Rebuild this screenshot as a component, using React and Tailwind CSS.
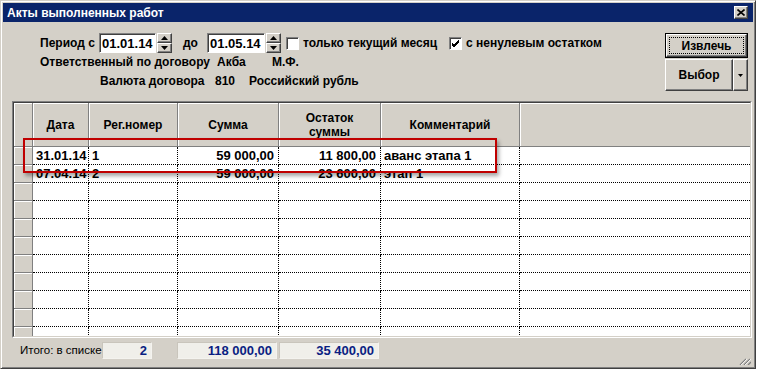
import React from "react";

const raised = "border border-white border-r-[#404040] border-b-[#404040] shadow-[inset_-1px_-1px_0_#808080]";
const sunken = "border border-[#808080] border-r-white border-b-white shadow-[inset_1px_1px_0_#404040]";

const rows = [
  ["31.01.14", "1", "59 000,00", "11 800,00", "аванс этапа 1"],
  ["07.04.14", "2", "59 000,00", "23 600,00", "этап 1"],
  ["", "", "", "", ""],
  ["", "", "", "", ""],
  ["", "", "", "", ""],
  ["", "", "", "", ""],
  ["", "", "", "", ""],
  ["", "", "", "", ""],
  ["", "", "", "", ""],
  ["", "", "", "", ""],
  ["", "", "", "", ""],
];

function Spinner() {
  return (
    <div className="flex flex-col w-[15px] h-[20px] ml-[1px]">
      <div className={`flex-1 flex items-center justify-center bg-[#d4d0c8] ${raised}`}>
        <svg width="7" height="4" viewBox="0 0 7 4"><path d="M3.5 0L7 4H0z" fill="#000" /></svg>
      </div>
      <div className={`flex-1 flex items-center justify-center bg-[#d4d0c8] ${raised}`}>
        <svg width="7" height="4" viewBox="0 0 7 4"><path d="M0 0h7L3.5 4z" fill="#000" /></svg>
      </div>
    </div>
  );
}

function DateInput({ value, w }) {
  return (
    <div className={`${w} h-[20px] bg-white ${sunken} flex items-center pl-[2px] text-[13px] leading-none`}>
      {value}
    </div>
  );
}

function CheckBox({ checked }) {
  return (
    <div className={`w-[13px] h-[13px] bg-white ${sunken} flex items-center justify-center`}>
      {checked && (
        <svg width="9" height="9" viewBox="0 0 9 9">
          <path d="M1 4l2 2 5-5M1 5l2 2 5-5M1 6l2 2 5-5" stroke="#000" strokeWidth="1" fill="none" />
        </svg>
      )}
    </div>
  );
}

export default function App() {
  return (
    <div className="w-[757px] h-[370px] bg-white font-['Liberation_Sans',Arial,sans-serif] text-black">
      <div className="relative w-[756px] h-[369px] bg-[#d4d0c8] border border-[#d4d0c8] border-r-[#404040] border-b-[#404040] shadow-[inset_1px_1px_0_#fff,inset_-1px_-1px_0_#808080] p-[2px] flex flex-col">
        {/* Title bar */}
        <div className="h-[19px] shrink-0 bg-[#0a246a] flex items-center justify-between pl-[4px] pr-[5px]">
          <span className="text-white text-[12px] font-bold leading-none">Акты выполненных работ</span>
          <div className={`w-[14px] h-[13px] bg-[#d4d0c8] ${raised} flex items-center justify-center`}>
            <svg width="8" height="7" viewBox="0 0 8 7">
              <path d="M0.5 0.5L7.5 6.5M7.5 0.5L0.5 6.5" stroke="#000" strokeWidth="1.6" />
            </svg>
          </div>
        </div>

        {/* Form */}
        <div className="flex shrink-0 justify-between pt-[11px] pr-[5px] h-[69px]">
          <div className="pl-[37px] flex flex-col text-[12px] font-bold whitespace-nowrap">
            <div className="h-[20px] flex items-center">
              <span className="w-[59px]">Период с</span>
              <DateInput value="01.01.14" w="w-[57px]" />
              <Spinner />
              <span className="ml-[11px] w-[24px]">до</span>
              <DateInput value="01.05.14" w="w-[58px]" />
              <Spinner />
              <div className="ml-[5px]"><CheckBox /></div>
              <span className="ml-[4px] w-[146px]">только текущий месяц</span>
              <CheckBox checked />
              <span className="ml-[4px]">с ненулевым остатком</span>
            </div>
            <div className="h-[14px] mt-[2px] flex items-center">
              <span className="w-[177px]">Ответственный по договору</span>
              <span className="w-[55px]">Акба</span>
              <span>М.Ф.</span>
            </div>
            <div className="h-[14px] mt-[5px] flex items-center pl-[60px]">
              <span className="w-[115px]">Валюта договора</span>
              <span className="w-[34px]">810</span>
              <span>Российский рубль</span>
            </div>
          </div>
          <div className="flex flex-col w-[83px] text-[12px] font-bold">
            <div className="h-[25px] border border-black">
              <div className={`h-full bg-[#d4d0c8] ${raised} flex items-center justify-center p-[2px]`}>
                <div className="w-full h-full border border-dotted border-black flex items-center justify-center">Извлечь</div>
              </div>
            </div>
            <div className="flex h-[32px] mt-[1px]">
              <div className={`w-[68px] bg-[#d4d0c8] ${raised} flex items-center justify-center`}>Выбор</div>
              <div className={`flex-1 bg-[#d4d0c8] ${raised} flex items-center justify-center`}>
                <svg width="5" height="3" viewBox="0 0 5 3"><path d="M0 0h5L2.5 3z" fill="#000" /></svg>
              </div>
            </div>
          </div>
        </div>

        {/* Grid */}
        <div className="relative shrink-0 ml-[9px] mt-[10px] w-[740px] h-[237px] border border-[#808080] border-r-white border-b-white">
          <div className="w-full h-full border border-[#404040] border-r-[#d4d0c8] border-b-[#d4d0c8] bg-white overflow-hidden">
            <div className="h-[44px] flex bg-[#d4d0c8] border-b border-[#808080] text-[12px] font-bold">
              <div className="w-[19px] border-r border-[#808080] shadow-[inset_1px_1px_0_#fff]" />
              <div className="w-[56px] border-r border-[#808080] shadow-[inset_1px_1px_0_#fff] flex items-center justify-center">Дата</div>
              <div className="w-[89px] border-r border-[#808080] shadow-[inset_1px_1px_0_#fff] flex items-center justify-center">Рег.номер</div>
              <div className="w-[101px] border-r border-[#808080] shadow-[inset_1px_1px_0_#fff] flex items-center justify-center">Сумма</div>
              <div className="w-[102px] border-r border-[#808080] shadow-[inset_1px_1px_0_#fff] flex flex-col items-center justify-center leading-[14px]">
                <span>Остаток</span>
                <span>суммы</span>
              </div>
              <div className="w-[139px] border-r border-[#808080] shadow-[inset_1px_1px_0_#fff] flex items-center justify-center">Комментарий</div>
              <div className="flex-1 shadow-[inset_1px_1px_0_#fff]" />
            </div>
            {rows.map((r, i) => (
              <div key={i} className="h-[18px] flex text-[13px] font-bold leading-[17px] whitespace-nowrap">
                <div className="w-[19px] bg-[#d4d0c8] border-r border-b border-[#808080] shadow-[inset_1px_1px_0_#fff]" />
                <div className="w-[56px] border-r border-b border-dotted border-black pl-[3px]">{r[0]}</div>
                <div className="w-[89px] border-r border-b border-dotted border-black pl-[3px]">{r[1]}</div>
                <div className="w-[101px] border-r border-b border-dotted border-black pr-[4px] text-right">{r[2]}</div>
                <div className="w-[102px] border-r border-b border-dotted border-black pr-[4px] text-right">{r[3]}</div>
                <div className="w-[139px] border-r border-b border-dotted border-black pl-[3px]">{r[4]}</div>
                <div className="flex-1 border-b border-dotted border-black" />
              </div>
            ))}
          </div>
        </div>

        {/* Footer */}
        <div className="flex shrink-0 items-center mt-[4px] h-[17px] text-[11.5px] whitespace-nowrap">
          <span className="ml-[17px] w-[82px]">Итого: в списке</span>
          <div className="w-[50px] h-[17px] bg-[#f0efea] border border-[#c9c5bc] border-r-[#f4f3ef] border-b-[#f4f3ef] text-right pr-[4px] text-[13px] font-bold text-[#0a1e82] leading-[15px]">2</div>
          <div className="ml-[25px] w-[100px] h-[17px] bg-[#f0efea] border border-[#c9c5bc] border-r-[#f4f3ef] border-b-[#f4f3ef] text-right pr-[4px] text-[13px] font-bold text-[#0a1e82] leading-[15px]">118 000,00</div>
          <div className="ml-[2px] w-[100px] h-[17px] bg-[#f0efea] border border-[#c9c5bc] border-r-[#f4f3ef] border-b-[#f4f3ef] text-right pr-[4px] text-[13px] font-bold text-[#0a1e82] leading-[15px]">35 400,00</div>
        </div>

        <div className="absolute right-[4px] bottom-[3px]">
          <svg width="12" height="7" viewBox="0 0 12 7">
            <path d="M1 7L7 1M5 7L11 1M9 7L12 4" stroke="#808080" strokeWidth="1.3" />
            <path d="M2 7L8 1M6 7L12 1" stroke="#fff" strokeWidth="0.8" />
          </svg>
        </div>

        {/* Annotation */}
        <div className="absolute left-[22px] top-[137px] w-[474px] h-[35px] border-2 border-[#c00000] shadow-[2px_3px_4px_rgba(0,0,0,0.35)]" />
      </div>
    </div>
  );
}
